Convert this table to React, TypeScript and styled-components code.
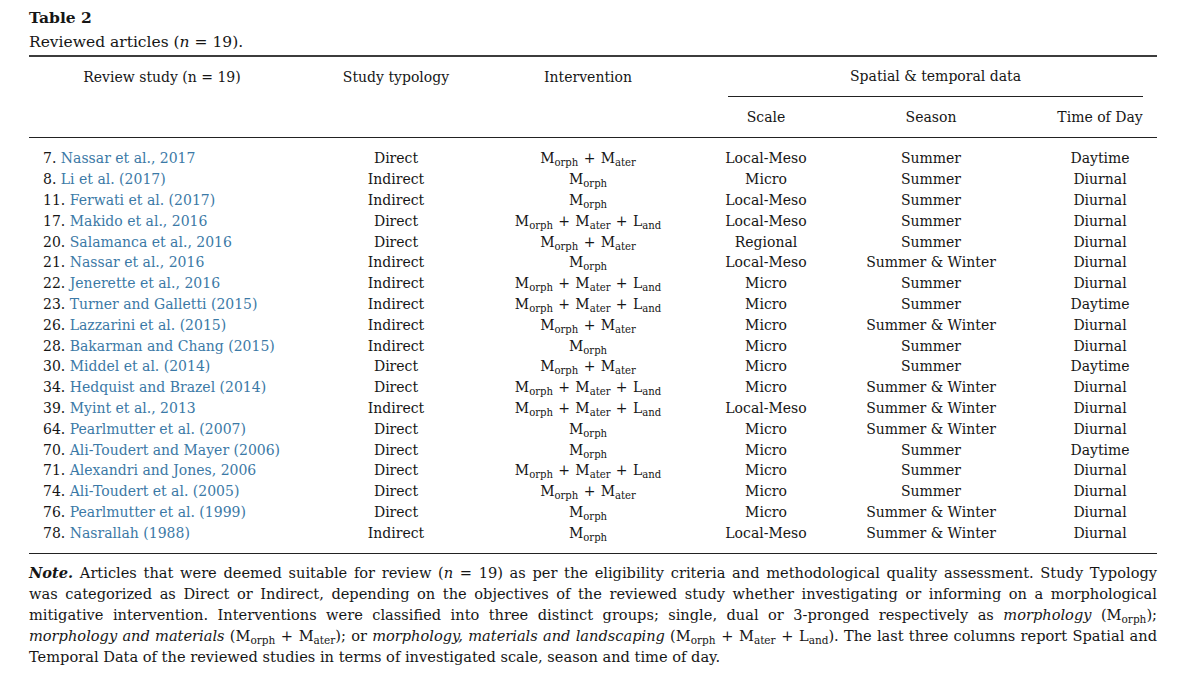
import React from "react";
import styled, { createGlobalStyle } from "styled-components";

const GlobalStyle = createGlobalStyle`
  html, body {
    margin: 0;
    padding: 0;
    background: #ffffff;
  }
  body {
    font-family: "DejaVu Serif", "Liberation Serif", serif;
    color: #161616;
  }
`;

const Page = styled.div`
  width: 1200px;
  height: 692px;
  box-sizing: border-box;
  padding: 6px 43px 0 29px;
  overflow: hidden;
`;

const Caption = styled.div`
  font-size: 15.5px;
  line-height: 24px;
`;

const CaptionTitle = styled.div`
  font-weight: bold;
`;

const Table = styled.table`
  width: 1128px;
  margin-top: 1px;
  border-collapse: collapse;
  table-layout: fixed;
  font-size: 14px;
  border-top: 2px solid #3c3c3c;
  border-bottom: 1.5px solid #222;
`;

const Head = styled.thead`
  border-bottom: 1.5px solid #222;
`;

const HeadCell = styled.th<{ $align?: string; $padLeft?: number }>`
  font-weight: normal;
  text-align: ${(p) => p.$align || "center"};
  padding: 0 0 0 ${(p) => p.$padLeft || 0}px;
  height: 40px;
  vertical-align: middle;
`;

const SpanHead = styled.div`
  margin: 0 14px 0 49px;
  height: 39px;
  line-height: 39px;
  border-bottom: 1px solid #222;
`;

const Cell = styled.td<{ $align?: string; $padLeft?: number }>`
  text-align: ${(p) => p.$align || "center"};
  padding: 0 0 0 ${(p) => p.$padLeft || 0}px;
  height: 20.8px;
  line-height: 20px;
  white-space: nowrap;
`;

const FirstRow = styled.tr`
  td {
    padding-top: 10px;
  }
`;

const LastRow = styled.tr`
  td {
    padding-bottom: 10px;
  }
`;

const StudyLink = styled.span`
  color: #3b79a6;
`;

const Sub = styled.sub`
  font-size: 0.72em;
  vertical-align: -0.28em;
  line-height: 0;
`;

const Plus = styled.span`
  padding: 0 0.38em;
`;

const Note = styled.div`
  margin-top: 8px;
  font-size: 14.6px;
  line-height: 21px;
`;

const NoteLine = styled.div<{ $last?: boolean }>`
  text-align: justify;
  text-align-last: ${(p) => (p.$last ? "left" : "justify")};
  white-space: nowrap;
`;

const NoteLead = styled.b`
  font-style: italic;
`;

type Kind = "M" | "MM" | "MML";

const Morph = () => (
  <>
    M<Sub>orph</Sub>
  </>
);
const Mater = () => (
  <>
    M<Sub>ater</Sub>
  </>
);
const Land = () => (
  <>
    L<Sub>and</Sub>
  </>
);

function Intervention({ kind }: { kind: Kind }) {
  return (
    <>
      <Morph />
      {kind !== "M" && (
        <>
          <Plus>+</Plus>
          <Mater />
        </>
      )}
      {kind === "MML" && (
        <>
          <Plus>+</Plus>
          <Land />
        </>
      )}
    </>
  );
}

type Row = [string, string, string, Kind, string, string, string];

const rows: Row[] = [
  ["7.", "Nassar et al., 2017", "Direct", "MM", "Local-Meso", "Summer", "Daytime"],
  ["8.", "Li et al. (2017)", "Indirect", "M", "Micro", "Summer", "Diurnal"],
  ["11.", "Ferwati et al. (2017)", "Indirect", "M", "Local-Meso", "Summer", "Diurnal"],
  ["17.", "Makido et al., 2016", "Direct", "MML", "Local-Meso", "Summer", "Diurnal"],
  ["20.", "Salamanca et al., 2016", "Direct", "MM", "Regional", "Summer", "Diurnal"],
  ["21.", "Nassar et al., 2016", "Indirect", "M", "Local-Meso", "Summer & Winter", "Diurnal"],
  ["22.", "Jenerette et al., 2016", "Indirect", "MML", "Micro", "Summer", "Diurnal"],
  ["23.", "Turner and Galletti (2015)", "Indirect", "MML", "Micro", "Summer", "Daytime"],
  ["26.", "Lazzarini et al. (2015)", "Indirect", "MM", "Micro", "Summer & Winter", "Diurnal"],
  ["28.", "Bakarman and Chang (2015)", "Indirect", "M", "Micro", "Summer", "Diurnal"],
  ["30.", "Middel et al. (2014)", "Direct", "MM", "Micro", "Summer", "Daytime"],
  ["34.", "Hedquist and Brazel (2014)", "Direct", "MML", "Micro", "Summer & Winter", "Diurnal"],
  ["39.", "Myint et al., 2013", "Indirect", "MML", "Local-Meso", "Summer & Winter", "Diurnal"],
  ["64.", "Pearlmutter et al. (2007)", "Direct", "M", "Micro", "Summer & Winter", "Diurnal"],
  ["70.", "Ali-Toudert and Mayer (2006)", "Direct", "M", "Micro", "Summer", "Daytime"],
  ["71.", "Alexandri and Jones, 2006", "Direct", "MML", "Micro", "Summer", "Diurnal"],
  ["74.", "Ali-Toudert et al. (2005)", "Direct", "MM", "Micro", "Summer", "Diurnal"],
  ["76.", "Pearlmutter et al. (1999)", "Direct", "M", "Micro", "Summer & Winter", "Diurnal"],
  ["78.", "Nasrallah (1988)", "Indirect", "M", "Local-Meso", "Summer & Winter", "Diurnal"],
];

function DataRow({ row, index }: { row: Row; index: number }) {
  const [num, study, typ, kind, scale, season, time] = row;
  const cells = (
    <>
      <Cell $align="left" $padLeft={14}>
        {num} <StudyLink>{study}</StudyLink>
      </Cell>
      <Cell>{typ}</Cell>
      <Cell>
        <Intervention kind={kind} />
      </Cell>
      <Cell>{scale}</Cell>
      <Cell>{season}</Cell>
      <Cell $padLeft={34}>{time}</Cell>
    </>
  );
  if (index === 0) return <FirstRow>{cells}</FirstRow>;
  if (index === rows.length - 1) return <LastRow>{cells}</LastRow>;
  return <tr>{cells}</tr>;
}

export default function App() {
  return (
    <Page>
      <GlobalStyle />
      <Caption>
        <CaptionTitle>Table 2</CaptionTitle>
        <div>
          Reviewed articles (<i>n</i> = 19).
        </div>
      </Caption>

      <Table>
        <colgroup>
          <col style={{ width: 266 }} />
          <col style={{ width: 202 }} />
          <col style={{ width: 182 }} />
          <col style={{ width: 174 }} />
          <col style={{ width: 156 }} />
          <col style={{ width: 148 }} />
        </colgroup>
        <Head>
          <tr>
            <HeadCell>Review study (n = 19)</HeadCell>
            <HeadCell>Study typology</HeadCell>
            <HeadCell>Intervention</HeadCell>
            <HeadCell colSpan={3} style={{ verticalAlign: "top" }}>
              <SpanHead>Spatial &amp; temporal data</SpanHead>
            </HeadCell>
          </tr>
          <tr>
            <HeadCell />
            <HeadCell />
            <HeadCell />
            <HeadCell>Scale</HeadCell>
            <HeadCell>Season</HeadCell>
            <HeadCell $padLeft={34}>Time of Day</HeadCell>
          </tr>
        </Head>
        <tbody>
          {rows.map((r, i) => (
            <DataRow key={r[0]} row={r} index={i} />
          ))}
        </tbody>
      </Table>

      <Note>
        <NoteLine>
          <NoteLead>Note.</NoteLead> Articles that were deemed suitable for review (<i>n</i> = 19) as per the
          eligibility criteria and methodological quality assessment. Study Typology
        </NoteLine>
        <NoteLine>
          was categorized as Direct or Indirect, depending on the objectives of the reviewed study whether
          investigating or informing on a morphological
        </NoteLine>
        <NoteLine>
          mitigative intervention. Interventions were classified into three distinct groups; single, dual or
          3-pronged respectively as <i>morphology</i> (<Morph />);
        </NoteLine>
        <NoteLine>
          <i>morphology and materials</i> (<Morph />
          <Plus>+</Plus>
          <Mater />
          ); or <i>morphology, materials and landscaping</i> (<Morph />
          <Plus>+</Plus>
          <Mater />
          <Plus>+</Plus>
          <Land />
          ). The last three columns report Spatial and
        </NoteLine>
        <NoteLine $last>
          Temporal Data of the reviewed studies in terms of investigated scale, season and time of day.
        </NoteLine>
      </Note>
    </Page>
  );
}
